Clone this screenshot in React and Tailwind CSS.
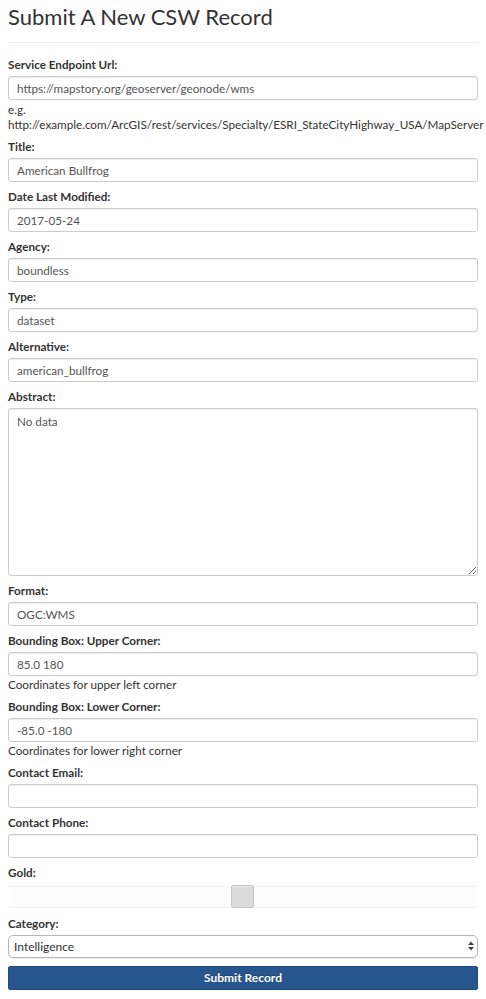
import React from "react";

const FONT = { fontFamily: "Lato, 'Open Sans', sans-serif" };

function Label({ children }) {
  return (
    <label className="block text-[11.7px] leading-[16px] font-bold text-[#333] mb-[4px]">
      {children}
    </label>
  );
}

function Input({ value }) {
  return (
    <input
      type="text"
      defaultValue={value}
      className="block w-full h-[24px] border border-[#ccc] rounded-[3px] bg-white px-[8px] text-[11.7px] text-[#555] shadow-[inset_0_1px_1px_rgba(0,0,0,0.075)] outline-none"
      style={FONT}
    />
  );
}

function Help({ children }) {
  return <div className="text-[11.7px] leading-[15px] text-[#333] mt-[1px] whitespace-nowrap">{children}</div>;
}

function Field({ label, value, help }) {
  return (
    <div className="mb-[6px]">
      <Label>{label}</Label>
      <Input value={value} />
      {help}
    </div>
  );
}

export default function App() {
  return (
    <div className="w-[486px] h-[999px] bg-white px-[8px] overflow-hidden" style={FONT}>
      <h1 className="text-[22px] leading-[32px] text-[#333] pt-[1px] m-0 font-normal">Submit A New CSW Record</h1>
      <div className="h-px bg-[#eee] mt-[9px] mb-[13px]" />
      <form onSubmit={(e) => e.preventDefault()}>
        <Field
          label="Service Endpoint Url:"
          value="https://mapstory.org/geoserver/geonode/wms"
          help={
            <div className="text-[11.7px] leading-[15px] text-[#333] mt-[2px] mr-[-8px] whitespace-nowrap">
              <div>e.g.</div>
              <div>http://example.com/ArcGIS/rest/services/Specialty/ESRI_StateCityHighway_USA/MapServer</div>
            </div>
          }
        />
        <Field label="Title:" value="American Bullfrog" />
        <Field label="Date Last Modified:" value="2017-05-24" />
        <Field label="Agency:" value="boundless" />
        <Field label="Type:" value="dataset" />
        <Field label="Alternative:" value="american_bullfrog" />
        <div className="mb-[6px]">
          <Label>Abstract:</Label>
          <textarea
            defaultValue="No data"
            className="block w-full h-[168px] border border-[#ccc] rounded-[3px] bg-white px-[8px] py-[4px] text-[11.7px] leading-[17px] text-[#555] shadow-[inset_0_1px_1px_rgba(0,0,0,0.075)] outline-none"
            style={FONT}
          />
        </div>
        <Field label="Format:" value="OGC:WMS" />
        <Field
          label="Bounding Box: Upper Corner:"
          value="85.0 180"
          help={<Help>Coordinates for upper left corner</Help>}
        />
        <Field
          label="Bounding Box: Lower Corner:"
          value="-85.0 -180"
          help={<Help>Coordinates for lower right corner</Help>}
        />
        <Field label="Contact Email:" value="" />
        <Field label="Contact Phone:" value="" />
        <div className="mb-[7px]">
          <Label>Gold:</Label>
          <div className="relative h-[23px] mt-[5px]">
            <div className="absolute left-[1px] right-[1px] top-[1px] bottom-0 bg-[#fcfcfc] border-y border-[#f3f3f3]" />
            <div className="absolute left-[223px] top-0 w-[23px] h-[23px] bg-[#dcdcdc] border border-[#c4c4c4] rounded-[2px] shadow-[inset_0_1px_0_rgba(255,255,255,0.4)]" />
          </div>
        </div>
        <div className="mb-[8px]">
          <Label>Category:</Label>
          <div className="relative">
            <select
              defaultValue="Intelligence"
              className="block w-full h-[23px] appearance-none border border-[#b5b5b5] rounded-[5px] bg-white pl-[5px] pr-[20px] text-[12px] text-[#333] outline-none shadow-[0_1px_0_rgba(0,0,0,0.05)]"
              style={FONT}
            >
              <option>Intelligence</option>
            </select>
            <svg className="absolute right-[4px] top-[6px] pointer-events-none" width="6" height="10" viewBox="0 0 6 10">
              <path d="M0 4 L3 0.5 L6 4 Z" fill="#444" />
              <path d="M0 6 L3 9.5 L6 6 Z" fill="#444" />
            </svg>
          </div>
        </div>
        <button
          type="submit"
          className="block w-full h-[24px] bg-[#27568e] border border-[#204a7c] rounded-[2px] text-white text-[12px] font-bold leading-[22px] [text-shadow:0_-1px_0_rgba(0,0,0,0.25)]"
          style={FONT}
        >
          Submit Record
        </button>
      </form>
    </div>
  );
}
